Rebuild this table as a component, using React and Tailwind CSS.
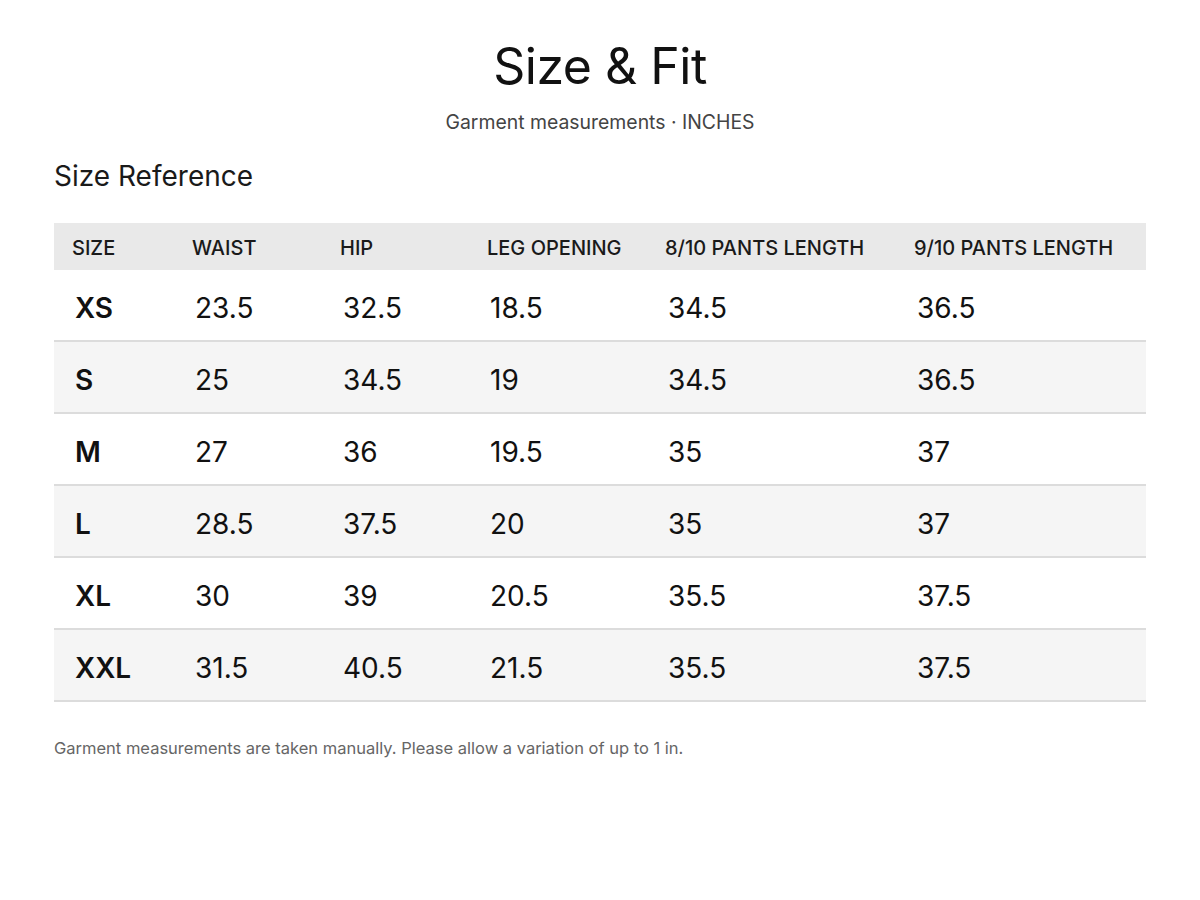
import React from "react";

const rows = [
  ["XS", "23.5", "32.5", "18.5", "34.5", "36.5"],
  ["S", "25", "34.5", "19", "34.5", "36.5"],
  ["M", "27", "36", "19.5", "35", "37"],
  ["L", "28.5", "37.5", "20", "35", "37"],
  ["XL", "30", "39", "20.5", "35.5", "37.5"],
  ["XXL", "31.5", "40.5", "21.5", "35.5", "37.5"],
];

const heads = ["SIZE", "WAIST", "HIP", "LEG OPENING", "8/10 PANTS LENGTH", "9/10 PANTS LENGTH"];

export default function App() {
  return (
    <div className="w-[1200px] h-[900px] bg-white text-[#111] [font-family:Inter,'Noto_Sans',sans-serif]">
      <div className="px-[54px] pt-[36px]">
        <h1 className="text-center text-[50px] leading-[60px] font-normal tracking-[-0.5px]">Size &amp; Fit</h1>
        <p className="text-center text-[19.4px] leading-[24px] text-[#444] mt-[14px]">Garment measurements · INCHES</p>
        <h2 className="text-[28px] leading-[36px] text-[#1a1a1a] mt-[24px]">Size Reference</h2>
        <div className="mt-[29px]">
          <div className="grid grid-cols-[120px_148px_147px_178px_249px_250px] h-[47px] items-center bg-[#e9e9e9]">
            {heads.map((h) => (
              <div key={h} className="pl-[18px] pt-[3px] text-[20px] font-medium text-[#1a1a1a]">{h}</div>
            ))}
          </div>
          {rows.map((r, i) => (
            <div
              key={r[0]}
              className={`grid grid-cols-[120px_148px_147px_178px_249px_250px] h-[72px] items-center border-b-2 border-[#dcdcdc] ${i % 2 === 1 ? "bg-[#f5f5f5]" : "bg-white"}`}
            >
              {r.map((c, j) => (
                <div key={j} className={`pl-[21px] pt-[5px] text-[28px] ${j === 0 ? "font-semibold" : "font-normal"}`}>{c}</div>
              ))}
            </div>
          ))}
        </div>
        <p className="mt-[34px] text-[16.5px] text-[#666]">Garment measurements are taken manually. Please allow a variation of up to 1 in.</p>
      </div>
    </div>
  );
}
